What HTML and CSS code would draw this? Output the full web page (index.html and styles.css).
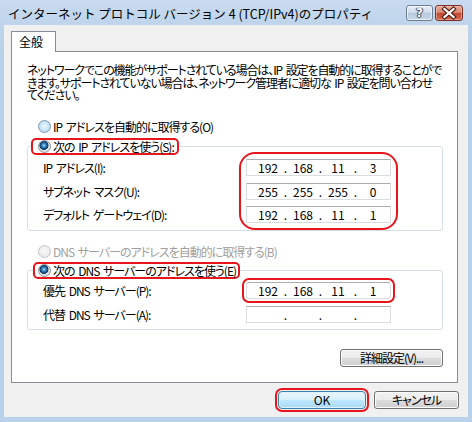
FILE: index.html
```html
<!DOCTYPE html>
<html lang="ja">
<head>
<meta charset="utf-8">
<title>IPv4 プロパティ</title>
<link rel="stylesheet" href="styles.css">
</head>
<body>
<div class="window">
  <div class="titlebar">
    <div class="title">インターネット プロトコル バージョン 4 (TCP/IPv4)のプロパティ</div>
    <div class="caption-buttons">
      <div class="cbtn help"><span class="qmark">?</span></div>
      <div class="cbtn close">
        <svg width="26" height="14" viewBox="0 0 26 14">
          <path d="M8.5 3 L17.5 11 M17.5 3 L8.5 11" stroke="#5a1e16" stroke-width="4.4" stroke-linecap="square" fill="none"/>
          <path d="M8.5 3 L17.5 11 M17.5 3 L8.5 11" stroke="#ffffff" stroke-width="2.3" stroke-linecap="square" fill="none"/>
        </svg>
      </div>
    </div>
  </div>
  <div class="client">
    <div class="tabs"><div class="tab">全般</div></div>
    <div class="panel">
      <p class="desc">ネットワークでこの機能がサポートされている場合は、IP 設定を自動的に取得することがで<br>きます。サポートされていない場合は、ネットワーク管理者に適切な IP 設定を問い合わせ<br>てください。</p>

      <div class="radio-row first"><span class="radio off"></span><span>IP アドレスを自動的に取得する(O)</span></div>

      <fieldset class="group group-ip">
        <legend class="legend legend-ip"><span class="radio on"></span><span>次の IP アドレスを使う(S):</span></legend>
        <div class="group-body">
          <div class="labels">
            <div class="lbl">IP アドレス(I):</div>
            <div class="lbl">サブネット マスク(U):</div>
            <div class="lbl">デフォルト ゲートウェイ(D):</div>
          </div>
          <div class="fields marked">
            <div class="ip"><span>192</span><i>.</i><span>168</span><i>.</i><span>11</span><i>.</i><span>3</span></div>
            <div class="ip"><span>255</span><i>.</i><span>255</span><i>.</i><span>255</span><i>.</i><span>0</span></div>
            <div class="ip"><span>192</span><i>.</i><span>168</span><i>.</i><span>11</span><i>.</i><span>1</span></div>
          </div>
        </div>
      </fieldset>

      <div class="radio-row disabled"><span class="radio dis"></span><span>DNS サーバーのアドレスを自動的に取得する(B)</span></div>

      <fieldset class="group group-dns">
        <legend class="legend legend-dns"><span class="radio on"></span><span>次の DNS サーバーのアドレスを使う(E)</span></legend>
        <div class="group-body dns-body">
          <div class="labels">
            <div class="lbl">優先 DNS サーバー(P):</div>
            <div class="lbl">代替 DNS サーバー(A):</div>
          </div>
          <div class="fields">
            <div class="ip marked-one"><span>192</span><i>.</i><span>168</span><i>.</i><span>11</span><i>.</i><span>1</span></div>
            <div class="ip"><span></span><i>.</i><span></span><i>.</i><span></span><i>.</i><span></span></div>
          </div>
        </div>
      </fieldset>

      <div class="detail-row"><div class="btn detail">詳細設定(V)...</div></div>
    </div>
    <div class="dialog-buttons">
      <div class="btn ok">OK</div>
      <div class="btn cancel">キャンセル</div>
    </div>
  </div>
</div>
</body>
</html>
```
FILE: styles.css
```css
html, body {
  margin: 0;
  padding: 0;
}
body {
  width: 472px;
  height: 422px;
  overflow: hidden;
  background: #b9d1ea;
  font-family: "Noto Sans CJK JP", "Noto Sans", sans-serif;
  font-feature-settings: "palt";
  font-size: 12px;
  letter-spacing: -1px;
  word-spacing: 2px;
  color: #000;
}
.window {
  width: 472px;
  height: 422px;
  display: flex;
  flex-direction: column;
  background: linear-gradient(180deg, #c9dbef 0px, #bfd4ec 25px, #b9d1ea 60px);
}
.titlebar {
  height: 25px;
  display: flex;
  align-items: flex-start;
  flex: none;
}
.title {
  flex: 1;
  padding-left: 8px;
  font-size: 12.5px;
  font-feature-settings: normal;
  letter-spacing: 0;
  word-spacing: 0;
  line-height: 27px;
  white-space: nowrap;
  color: #000;
}
.caption-buttons {
  display: flex;
  gap: 2px;
  margin-top: 5px;
  margin-right: 9px;
}
.cbtn {
  height: 16px;
  box-sizing: border-box;
  border-radius: 3px;
  display: flex;
  align-items: center;
  justify-content: center;
  letter-spacing: 0;
}
.help {
  width: 27px;
  border: 1px solid #6e7f95;
  background: linear-gradient(180deg, #e7eef7 0%, #d2deec 45%, #b7c9de 50%, #c8d7e8 100%);
  box-shadow: inset 0 0 0 1px rgba(255,255,255,0.6);
}
.qmark {
  font-family: "DejaVu Sans", sans-serif;
  font-weight: bold;
  font-size: 12px;
  line-height: 14px;
  color: #fff;
  text-shadow: 0 0 1px #2c3e57, 0 0 1px #2c3e57, 1px 0 0 #4a5d77, -1px 0 0 #4a5d77, 0 1px 0 #4a5d77;
}
.close {
  width: 28px;
  border: 1px solid #7a3026;
  background: linear-gradient(180deg, #eaa899 0%, #d98a76 45%, #c34a33 52%, #d06a4e 100%);
  box-shadow: inset 0 0 0 1px rgba(255,220,210,0.45);
}
.close svg {
  display: block;
}

.client {
  flex: 1;
  margin: 0 4px 5px;
  background: #f0f0f0;
  padding: 6px 0 0 7px;
  box-sizing: border-box;
}
.tabs {
  height: 20px;
  display: flex;
}
.tab {
  width: 45px;
  height: 21px;
  box-sizing: border-box;
  border: 1px solid #898c95;
  border-bottom: none;
  background: #fff;
  position: relative;
  z-index: 1;
  padding-left: 7px;
  line-height: 19px;
  letter-spacing: 0;
}
.panel {
  width: 447px;
  height: 332px;
  box-sizing: border-box;
  border: 1px solid #898c95;
  background: #fff;
  padding: 12px 14px 0 15px;
}
.desc {
  margin: 0;
  height: 37px;
  line-height: 12.5px;
  letter-spacing: -1.1px;
  white-space: nowrap;
}
.radio-row {
  display: flex;
  align-items: center;
  gap: 2px;
  height: 16px;
  padding-left: 11px;
  line-height: 13px;
}
.radio-row.first {
  margin-top: 17px;
}
.radio-row.disabled {
  margin-top: 12px;
  color: #a0a0a0;
}
.radio {
  width: 13px;
  height: 13px;
  box-sizing: border-box;
  border-radius: 50%;
  flex: none;
}
.radio.off {
  border: 1px solid #8096ab;
  background: radial-gradient(circle at 50% 45%, #f2f9fe 0, #d3ebfa 35%, #a9d2ee 100%);
}
.radio.on {
  border: 1px solid #8c9096;
  background: radial-gradient(circle at 45% 40%, #bfe6ff 0, #3f8fd0 1.6px, #17507f 3.4px, #0e3558 4.2px, #dcdfe2 4.8px, #f6f6f6 100%);
}
.radio.dis {
  border: 1px solid #c6c6c6;
  background: radial-gradient(circle at 50% 45%, #f8f8f8 0, #e6e6e6 100%);
}

.group {
  margin: 4px 0 0;
  padding: 4px 0 7px 0;
  width: 416px;
  box-sizing: border-box;
  border: 1px solid #d5dfe5;
  border-radius: 3px;
  min-inline-size: 0;
}
.group-dns {
  margin-top: 3px;
  padding: 3px 0 6px 0;
}
.legend {
  display: flex;
  align-items: center;
  gap: 2px;
  height: 17px;
  box-sizing: border-box;
  border: 2px solid #e8161c;
  border-radius: 5px;
  line-height: 13px;
  white-space: nowrap;
}
.legend-ip {
  margin-left: 3px;
  padding: 0 3px 0 5px;
}
.legend-dns {
  margin-left: 5px;
  padding: 0 2px 0 3px;
}
.group-body {
  display: flex;
  padding-left: 15px;
}
.labels {
  width: 203px;
  display: flex;
  flex-direction: column;
  gap: 6.5px;
}
.dns-body .labels,
.dns-body .fields {
  gap: 7px;
}
.lbl {
  height: 17px;
  line-height: 17px;
  white-space: nowrap;
}
.fields {
  width: 145px;
  display: flex;
  flex-direction: column;
  gap: 6.5px;
}
.marked {
  outline: 2px solid #e8161c;
  outline-offset: 5px;
  border-radius: 9px;
}
.marked-one {
  outline: 2px solid #e8161c;
  outline-offset: 2px;
  border-radius: 3px;
}
.ip {
  width: 145px;
  height: 17px;
  box-sizing: border-box;
  border: 1px solid #d9dde2;
  border-top-color: #abadb3;
  background: #fff;
  display: grid;
  grid-template-columns: 32px 3px 32px 3px 32px 3px 32px;
  padding-left: 5px;
  line-height: 15px;
  font-size: 12px;
  letter-spacing: 0;
}
.ip span {
  text-align: center;
}
.ip i {
  font-style: normal;
  text-align: center;
  display: flex;
  justify-content: center;
}

.detail-row {
  display: flex;
  justify-content: flex-end;
  margin-top: 19px;
}
.btn {
  height: 18px;
  box-sizing: border-box;
  border: 1px solid #707070;
  border-radius: 3px;
  background: linear-gradient(180deg, #f3f3f3 0%, #ebebeb 48%, #dddddd 52%, #cfcfcf 100%);
  box-shadow: inset 0 0 0 1px #fbfbfb;
  text-align: center;
  line-height: 16px;
  white-space: nowrap;
}
.detail {
  width: 103px;
}
.dialog-buttons {
  display: flex;
  justify-content: flex-end;
  gap: 8px;
  margin-top: 8px;
  padding-right: 9px;
}
.ok {
  width: 88px;
  border-color: #3c7fb1;
  background: linear-gradient(180deg, #eaf6fd 0%, #d9f0fc 48%, #bee6fd 52%, #a7d9f5 100%);
  box-shadow: inset 0 0 0 1px #dff2fd;
  outline: 2px solid #e8161c;
  outline-offset: 1px;
  border-radius: 4px;
  letter-spacing: 0;
}
.cancel {
  width: 85px;
}
```
